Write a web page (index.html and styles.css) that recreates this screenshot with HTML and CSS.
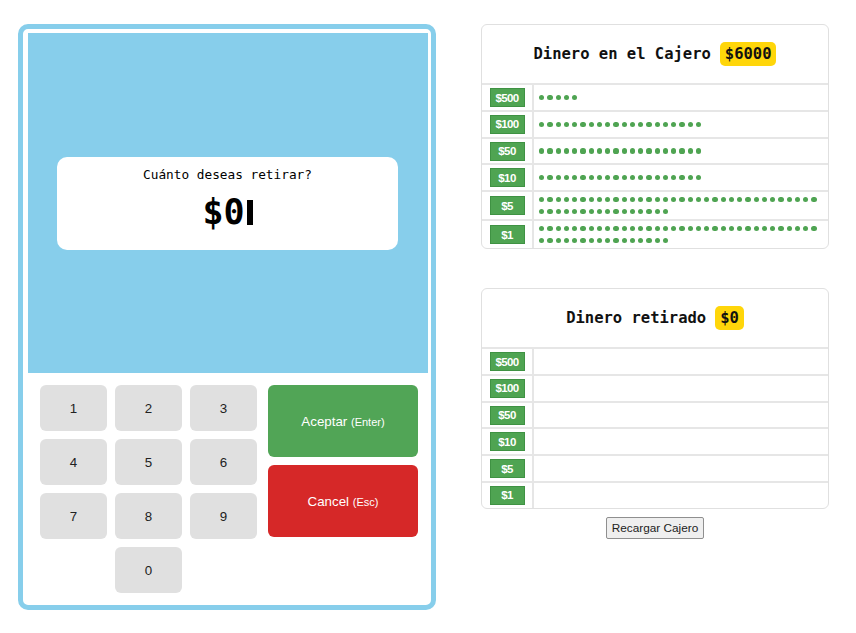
FILE: index.html
```html
<!DOCTYPE html>
<html lang="es">
<head>
<meta charset="utf-8">
<title>Cajero</title>
<link rel="stylesheet" href="styles.css">
</head>
<body>
<div class="page">
  <div class="atm">
    <div class="screen">
      <div class="prompt">
        <div class="prompt-label">Cuánto deseas retirar?</div>
        <div class="prompt-amount">$0<span class="cursor"></span></div>
      </div>
    </div>
    <div class="keypad">
      <div class="keys">
        <button class="key">1</button>
        <button class="key">2</button>
        <button class="key">3</button>
        <button class="key">4</button>
        <button class="key">5</button>
        <button class="key">6</button>
        <button class="key">7</button>
        <button class="key">8</button>
        <button class="key">9</button>
        <button class="key key-zero">0</button>
      </div>
      <div class="actions">
        <button class="action action-ok">Aceptar <small>(Enter)</small></button>
        <button class="action action-cancel">Cancel <small>(Esc)</small></button>
      </div>
    </div>
  </div>

  <div class="side">
    <div class="panel">
      <div class="panel-head"><span>Dinero en el Cajero</span><span class="badge">$6000</span></div>
      <div class="row"><div class="label"><span class="bill">$500</span></div><div class="dots"><i></i><i></i><i></i><i></i><i></i></div></div>
      <div class="row"><div class="label"><span class="bill">$100</span></div><div class="dots"><i></i><i></i><i></i><i></i><i></i><i></i><i></i><i></i><i></i><i></i><i></i><i></i><i></i><i></i><i></i><i></i><i></i><i></i><i></i><i></i></div></div>
      <div class="row"><div class="label"><span class="bill">$50</span></div><div class="dots"><i></i><i></i><i></i><i></i><i></i><i></i><i></i><i></i><i></i><i></i><i></i><i></i><i></i><i></i><i></i><i></i><i></i><i></i><i></i><i></i></div></div>
      <div class="row"><div class="label"><span class="bill">$10</span></div><div class="dots"><i></i><i></i><i></i><i></i><i></i><i></i><i></i><i></i><i></i><i></i><i></i><i></i><i></i><i></i><i></i><i></i><i></i><i></i><i></i><i></i></div></div>
      <div class="row"><div class="label"><span class="bill">$5</span></div><div class="dots dots-wrap"><i></i><i></i><i></i><i></i><i></i><i></i><i></i><i></i><i></i><i></i><i></i><i></i><i></i><i></i><i></i><i></i><i></i><i></i><i></i><i></i><i></i><i></i><i></i><i></i><i></i><i></i><i></i><i></i><i></i><i></i><i></i><i></i><i></i><i></i><i></i><i></i><i></i><i></i><i></i><i></i><i></i><i></i><i></i><i></i><i></i><i></i><i></i><i></i><i></i><i></i></div></div>
      <div class="row"><div class="label"><span class="bill">$1</span></div><div class="dots dots-wrap"><i></i><i></i><i></i><i></i><i></i><i></i><i></i><i></i><i></i><i></i><i></i><i></i><i></i><i></i><i></i><i></i><i></i><i></i><i></i><i></i><i></i><i></i><i></i><i></i><i></i><i></i><i></i><i></i><i></i><i></i><i></i><i></i><i></i><i></i><i></i><i></i><i></i><i></i><i></i><i></i><i></i><i></i><i></i><i></i><i></i><i></i><i></i><i></i><i></i><i></i></div></div>
    </div>

    <div class="panel panel-second">
      <div class="panel-head"><span>Dinero retirado</span><span class="badge">$0</span></div>
      <div class="row"><div class="label"><span class="bill">$500</span></div><div class="dots"></div></div>
      <div class="row"><div class="label"><span class="bill">$100</span></div><div class="dots"></div></div>
      <div class="row"><div class="label"><span class="bill">$50</span></div><div class="dots"></div></div>
      <div class="row"><div class="label"><span class="bill">$10</span></div><div class="dots"></div></div>
      <div class="row"><div class="label"><span class="bill">$5</span></div><div class="dots"></div></div>
      <div class="row"><div class="label"><span class="bill">$1</span></div><div class="dots"></div></div>
    </div>

    <div class="reload-wrap"><button class="reload">Recargar Cajero</button></div>
  </div>
</div>
</body>
</html>
```

FILE: styles.css
```css
* { box-sizing: border-box; }

body {
  margin: 0;
  background: #fff;
  font-family: "Liberation Sans", Arial, sans-serif;
  color: #222;
}

.page {
  display: flex;
  align-items: flex-start;
  padding: 24px 0 0 18px;
}

/* ATM */
.atm {
  width: 418px;
  border: 5px solid #87ceeb;
  border-radius: 10px;
  padding: 4px 3px 0 5px;
  background: #fff;
}

.screen {
  width: 400px;
  height: 340px;
  background: #87ceeb;
  display: flex;
  align-items: center;
  justify-content: center;
  padding-right: 1px;
}

.prompt {
  width: 341px;
  height: 93px;
  background: #fff;
  border-radius: 10px;
  padding-top: 9px;
  text-align: center;
  font-family: "DejaVu Sans Mono", "Liberation Mono", monospace;
  color: #000;
}

.prompt-label {
  font-size: 12.75px;
  line-height: 18px;
}

.prompt-amount {
  margin-top: 6px;
  font-size: 35px;
  line-height: 44px;
  font-weight: bold;
}

.cursor {
  display: inline-block;
  width: 6px;
  height: 25px;
  margin-left: 2px;
  background: #000;
  vertical-align: -1px;
}

.keypad {
  display: flex;
  padding: 12px 10px 12px 12px;
}

.keys {
  display: grid;
  grid-template-columns: repeat(3, 67px);
  grid-auto-rows: 46px;
  gap: 8px;
}

.key {
  border: 0;
  margin: 0;
  padding: 0;
  background: #e0e0e0;
  border-radius: 6px;
  font-family: "Liberation Sans", Arial, sans-serif;
  font-size: 13.33px;
  color: #222;
}

.key-zero { grid-column: 2; }

.actions {
  width: 150px;
  margin-left: 11px;
  display: flex;
  flex-direction: column;
  gap: 8px;
}

.action {
  height: 72px;
  border: 0;
  margin: 0;
  padding: 0;
  border-radius: 6px;
  color: #fff;
  font-family: "Liberation Sans", Arial, sans-serif;
  font-size: 13.33px;
}

.action small { font-size: 11px; }

.action-ok { background: #51a556; }
.action-cancel { background: #d62828; }

/* Side panels */
.side {
  width: 348px;
  margin-left: 45px;
}

.panel {
  border: 1px solid #e0e0e0;
  border-radius: 6px;
  overflow: hidden;
  background: #fff;
}

.panel-second { margin-top: 39px; }

.panel-head {
  height: 58px;
  display: flex;
  align-items: center;
  justify-content: center;
  gap: 9px;
  font-family: "DejaVu Sans Mono", "Liberation Mono", monospace;
  font-weight: bold;
  font-size: 15.5px;
  color: #111;
}

.badge {
  background: #ffd60a;
  border-radius: 5px;
  padding: 0 5px;
  line-height: 24px;
  height: 24px;
}

.row {
  display: flex;
  align-items: stretch;
  border-top: 2px solid #e6e6e6;
}

.label {
  width: 52px;
  flex: none;
  border-right: 2px solid #e6e6e6;
  padding: 3px 0 2.75px;
  display: flex;
  justify-content: center;
  align-items: center;
}

.bill {
  display: flex;
  align-items: center;
  justify-content: center;
  width: 35px;
  height: 19px;
  background: #4fa452;
  border: 1px solid #3f9243;
  color: #fff;
  font-family: "Liberation Sans", Arial, sans-serif;
  font-weight: bold;
  font-size: 11.5px;
  letter-spacing: -0.6px;
}

.dots {
  flex: 1;
  display: flex;
  flex-wrap: wrap;
  align-content: center;
  align-items: center;
  gap: 6.5px 3px;
  padding: 5px 6px 5px 5px;
}

.dots i {
  display: block;
  width: 5.25px;
  height: 5.25px;
  border-radius: 50%;
  background: #4fa452;
}

.reload-wrap {
  display: flex;
  justify-content: center;
  margin-top: 8px;
}

.reload {
  height: 22px;
  padding: 0 5px;
  margin: 0;
  border: 1px solid #8f8f8f;
  border-radius: 2px;
  background: #efefef;
  font-family: "Liberation Sans", Arial, sans-serif;
  font-size: 11.8px;
  color: #222;
}
```
